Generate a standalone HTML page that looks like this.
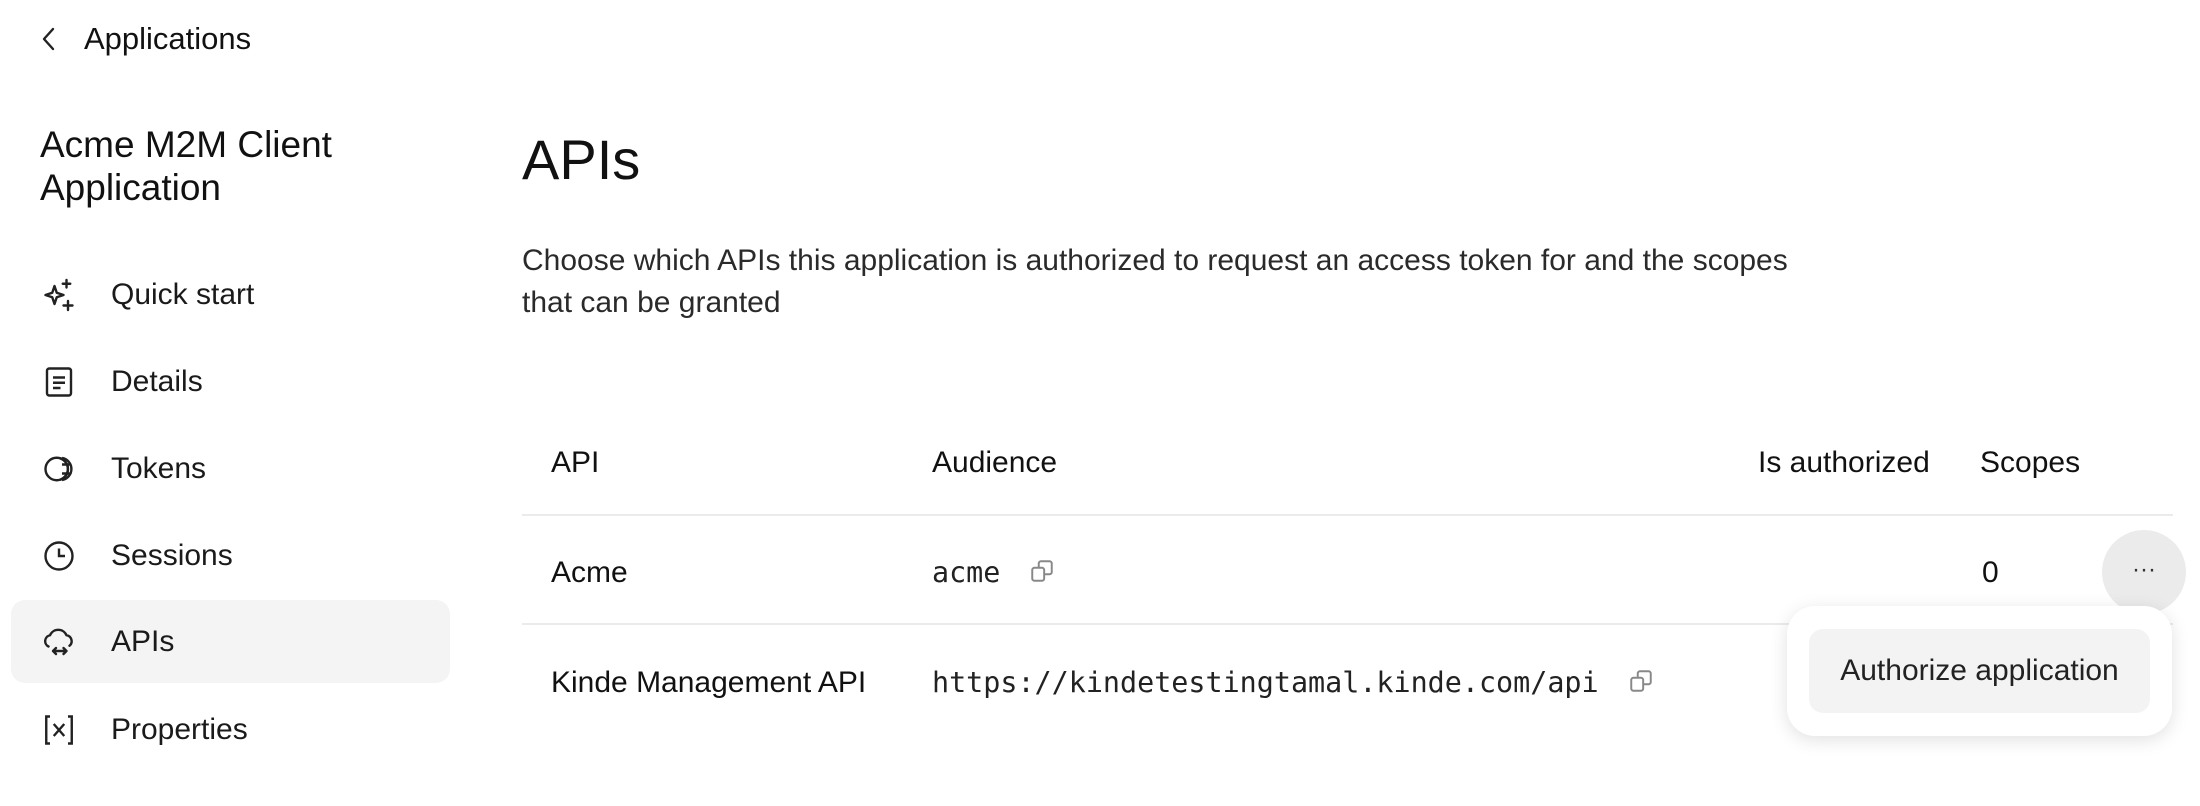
<!DOCTYPE html>
<html><head><meta charset="utf-8"><style>
*{margin:0;padding:0;box-sizing:border-box}
body{width:2200px;height:806px;background:#fff;font-family:"Liberation Sans",sans-serif;color:#111;position:relative;overflow:hidden}
.a{position:absolute;white-space:nowrap}
.nav{position:absolute;left:11px;width:439px;height:83px;border-radius:14px;display:flex;align-items:center}
.nav svg{position:absolute;left:30px;width:36px;height:36px}
.nav span{position:absolute;left:100px;font-size:30px;color:#1a1a1a}
.th{font-size:30px;top:446px;color:#111}
.line{position:absolute;left:522px;width:1651px;height:2px;background:#ebebeb}
.mono{font-family:"DejaVu Sans Mono","Liberation Mono",monospace;font-size:28.4px;color:#222}
.cp{position:absolute;width:26px;height:26px}
</style></head><body>
<svg class="a" style="left:38px;top:26px" width="22" height="26" viewBox="0 0 22 26"><path d="M15 3 L6 13 L15 23" fill="none" stroke="#222" stroke-width="2.4" stroke-linecap="round" stroke-linejoin="round"/></svg>
<div class="a" style="left:84px;top:21px;font-size:31px;color:#111">Applications</div>
<div class="a" style="left:40px;top:123px;font-size:37px;line-height:43px;color:#111">Acme M2M Client<br>Application</div>

<div class="nav" style="top:253px"><svg viewBox="0 0 24 24" fill="none" stroke="#222" stroke-width="1.6" stroke-linejoin="round" stroke-linecap="round"><path d="M9 6 L10.5 10.5 L15 12 L10.5 13.5 L9 18 L7.5 13.5 L3 12 L7.5 10.5 Z"/><path d="M17 2v5M14.5 4.5h5M18 16v6M15 19h6"/></svg><span>Quick start</span></div>
<div class="nav" style="top:340px"><svg viewBox="0 0 24 24" fill="none" stroke="#222" stroke-width="1.6"><rect x="4" y="3" width="16" height="18" rx="1.5"/><path d="M8 9h8M8 12.5h8M8 16h5"/></svg><span>Details</span></div>
<div class="nav" style="top:427px"><svg viewBox="0 0 24 24" fill="none" stroke="#222" stroke-width="1.6"><circle cx="10.5" cy="12" r="7.5"/><path d="M12.5 4.8a7.5 7.5 0 0 1 0 14.4"/><path d="M14 4.6a7.5 7.5 0 0 1 0 14.8M14 9h5M14 15h5"/></svg><span>Tokens</span></div>
<div class="nav" style="top:514px"><svg viewBox="0 0 24 24" fill="none" stroke="#222" stroke-width="1.6"><circle cx="12" cy="12" r="9"/><path d="M12 7v5h4"/></svg><span>Sessions</span></div>
<div class="nav" style="top:600px;background:#f4f4f4"><svg viewBox="0 0 24 24" fill="none" stroke="#222" stroke-width="1.6" stroke-linecap="round" stroke-linejoin="round"><path d="M5 15a4 4 0 0 1 1-7.5 6 6 0 0 1 11 0 4 4 0 0 1 2 7"/><path d="M8 18h9M15 16l2 2-2 2M8 18l2-2M8 18l2 2"/></svg><span style="font-weight:500">APIs</span></div>
<div class="nav" style="top:688px"><svg viewBox="0 0 24 24" fill="none" stroke="#222" stroke-width="1.6"><path d="M6 3H3.5v18H6M18 3h2.5v18H18M8.5 8l7 8M15.5 8l-7 8"/></svg><span>Properties</span></div>

<div class="a" style="left:522px;top:127px;font-size:56px;color:#111">APIs</div>
<div class="a" style="left:522px;top:240px;font-size:30px;line-height:42px;color:#2a2a2a">Choose which APIs this application is authorized to request an access token for and the scopes<br>that can be granted</div>

<div class="a th" style="left:551px">API</div>
<div class="a th" style="left:932px">Audience</div>
<div class="a th" style="left:1758px">Is authorized</div>
<div class="a th" style="left:1980px">Scopes</div>
<div class="line" style="top:514px"></div>
<div class="line" style="top:623px"></div>

<div class="a" style="left:551px;top:556px;font-size:30px">Acme</div>
<div class="a mono" style="left:932px;top:556px">acme</div>
<svg class="cp" style="left:1029px;top:558px" viewBox="0 0 24 24" fill="none" stroke="#888" stroke-width="1.8"><rect x="3" y="9" width="11" height="12" rx="2"/><path d="M9 9V5a2 2 0 0 1 2-2h8a2 2 0 0 1 2 2v8a2 2 0 0 1-2 2h-5"/></svg>
<div class="a" style="left:1982px;top:556px;font-size:30px">0</div>
<div class="a" style="left:2102px;top:530px;width:84px;height:84px;border-radius:50%;background:#ebebeb;text-align:center;line-height:80px;font-size:24px;color:#333">···</div>

<div class="a" style="left:551px;top:666px;font-size:30px">Kinde Management API</div>
<div class="a mono" style="left:932px;top:666px">https://kindetestingtamal.kinde.com/api</div>
<svg class="cp" style="left:1628px;top:668px" viewBox="0 0 24 24" fill="none" stroke="#888" stroke-width="1.8"><rect x="3" y="9" width="11" height="12" rx="2"/><path d="M9 9V5a2 2 0 0 1 2-2h8a2 2 0 0 1 2 2v8a2 2 0 0 1-2 2h-5"/></svg>

<div class="a" style="left:1787px;top:606px;width:385px;height:130px;background:#fff;border-radius:28px;box-shadow:0 4px 18px rgba(0,0,0,0.12)">
<div style="position:absolute;left:22px;top:23px;width:341px;height:84px;background:#f3f3f3;border-radius:14px;text-align:center;line-height:84px;font-size:30px;color:#222">Authorize application</div>
</div>
</body></html>
